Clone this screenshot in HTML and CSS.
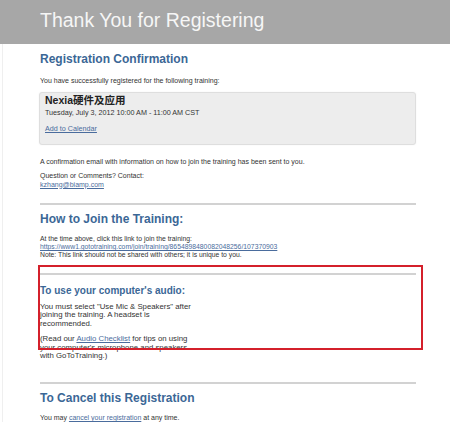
FILE: index.html
```html
<!DOCTYPE html>
<html lang="en">
<head>
    <meta charset="UTF-8">
    <meta name="viewport" content="width=device-width, initial-scale=1.0">
    <title>Thank You for Registering</title>
    <link rel="stylesheet" href="styles.css">
</head>
<body>
    <div class="header">
        <h1>Thank You for Registering</h1>
    </div>

    <div class="content">
        <h2 class="first">Registration Confirmation</h2>
        <p class="intro">You have successfully registered for the following training:</p>

        <div class="training-box">
            <div class="training-name">Nexia硬件及应用</div>
            <div class="training-date">Tuesday, July 3, 2012 10:00 AM - 11:00 AM CST</div>
            <a class="cal-link" href="#">Add to Calendar</a>
        </div>

        <p class="sent">A confirmation email with information on how to join the training has been sent to you.</p>
        <p class="contact">Question or Comments? Contact:<br><a href="#">kzhang@biamp.com</a></p>

        <hr>

        <h2>How to Join the Training:</h2>
        <p class="join">
            At the time above, click this link to join the training:<br>
            <a href="#">https://www1.gototraining.com/join/training/8654898480082048256/107370903</a><br>
            Note: This link should not be shared with others; it is unique to you.
        </p>

        <div class="audio">
            <hr>
            <h3>To use your computer's audio:</h3>
            <p class="audio-first">You must select "Use Mic &amp; Speakers" after joining the training. A headset is recommended.</p>
            <p class="audio-second">(Read our <a href="#">Audio Checklist</a> for tips on using your computer's microphone and speakers with GoToTraining.)</p>
            <div class="highlight"></div>
        </div>

        <hr class="after-audio">

        <h2>To Cancel this Registration</h2>
        <p class="cancel">You may <a href="#">cancel your registration</a> at any time.</p>
    </div>
</body>
</html>
```

FILE: styles.css
```css
body {
    margin: 0;
    font-family: "Liberation Sans", Arial, "Noto Sans CJK SC", sans-serif;
    color: #333;
    background-color: white;
}

.header {
    height: 44px;
    background-color: #a7a7a7;
    padding-left: 40px;
    box-sizing: border-box;
}

.header h1 {
    margin: 0;
    font-size: 19.5px;
    font-weight: normal;
    line-height: 40px;
    color: #f6f6f6;
}

.content {
    margin-left: 2px;
    border-left: 1px solid #efefef;
    padding: 8px 34px 0 37px;
}

h2 {
    margin: 7px 0 0;
    font-size: 12px;
    line-height: 14px;
    color: #3b6796;
}

h2.first {
    margin-top: 0;
}

p {
    margin: 0;
    font-size: 7px;
    line-height: 9px;
}

a {
    color: #4a6c9d;
    text-decoration: underline;
}

hr {
    margin: 14px 0 0;
    border: none;
    border-top: 2px solid #d2d2d2;
    height: 0;
}

.intro {
    margin-top: 10px;
}

.training-box {
    margin: 7px 0 0 -1px;
    padding: 1px 0 11px 5px;
    background-color: #ededed;
    border: 1px solid #dedede;
    border-radius: 3px;
    box-shadow: 0 0 2px rgba(0,0,0,0.06);
}

.training-name {
    font-size: 10.5px;
    line-height: 12px;
    font-weight: bold;
    color: #222;
    font-family: "Liberation Sans", Arial, "Noto Sans CJK SC", sans-serif;
}

.training-date {
    margin-top: 2px;
    font-size: 7.2px;
    line-height: 9px;
}

.cal-link {
    display: block;
    margin-top: 7px;
    font-size: 7.2px;
    line-height: 9px;
    width: max-content;
}

.sent {
    margin-top: 12px;
}

.contact {
    margin-top: 6px;
    line-height: 8.5px;
}

.join {
    margin-top: 9px;
    font-size: 6.8px;
    line-height: 8px;
}

/* bloque de audio con el recuadro rojo encima */
.audio {
    position: relative;
    margin-top: 6px;
    padding-top: 8px;
}

.audio hr {
    margin-top: 0;
}

.audio h3 {
    margin: 10px 0 0;
    font-size: 10px;
    line-height: 12px;
    color: #3b6796;
}

.audio p {
    width: 158px;
    font-size: 7.8px;
    line-height: 8.4px;
}

.audio-first {
    margin-top: 6px;
}

.audio p.audio-second {
    margin-top: 7px;
}

.highlight {
    position: absolute;
    top: 0;
    left: -2px;
    right: -7px;
    height: 84.5px;
    border: 2px solid #d4202b;
    box-sizing: border-box;
}

hr.after-audio {
    margin-top: 22px;
}

.cancel {
    margin-top: 8px;
}
```
